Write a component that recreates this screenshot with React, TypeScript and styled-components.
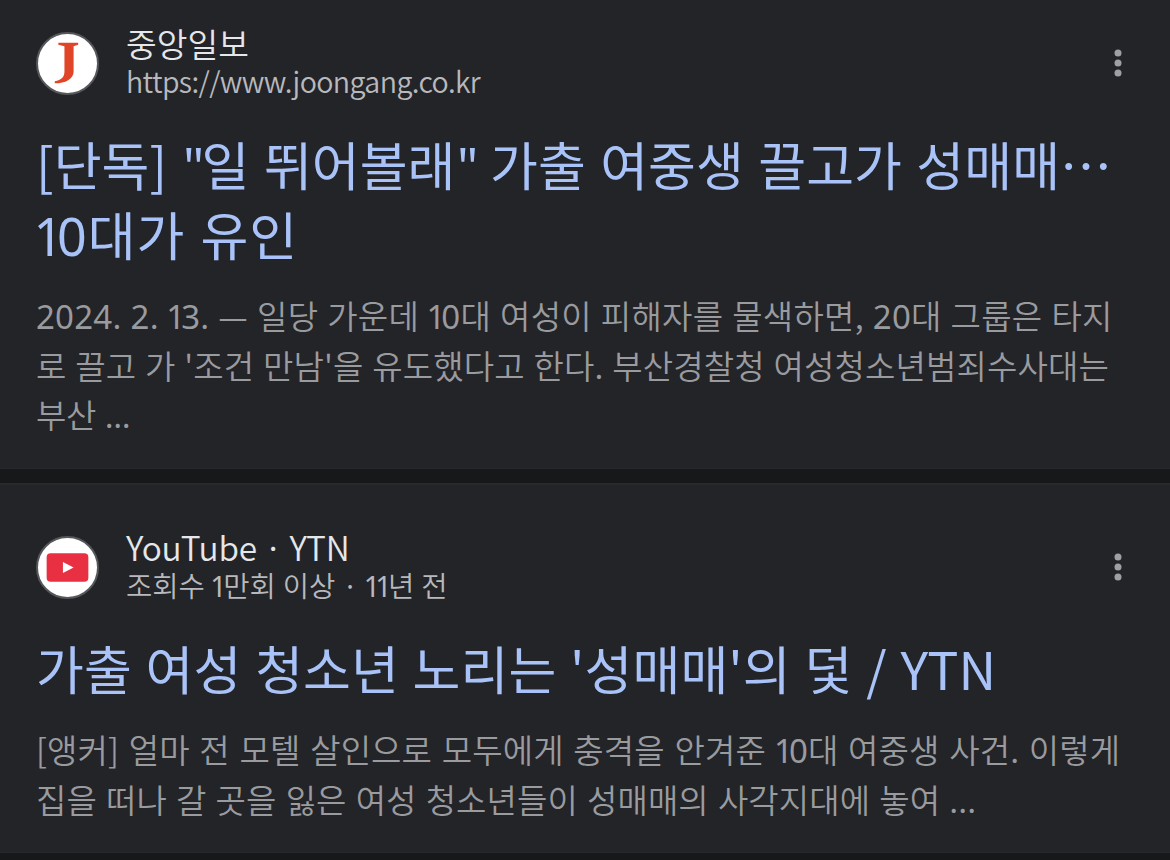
import styled, { createGlobalStyle } from "styled-components"

const GlobalStyle = createGlobalStyle`
    body {
        margin: 0;
        background: #17181a;
        font-family: "Noto Sans CJK KR", sans-serif;
    }
`
const Page = styled.main`
    width: 1170px;
    height: 860px;
    overflow: hidden;
    display: grid;
    grid-template-rows: 469px 370px 1fr;
    row-gap: 14px;
    background: #17181a;
`
const Result = styled.article<{ top: number }>`
    box-sizing: border-box;
    padding: ${({ top }) => top}px 0 0 36px;
    background: #232428;
    border-bottom: 1px solid #28292c;

    & + & {
        box-shadow: inset 0 2px 0 #28292c;
    }
`
const Source = styled.header`
    height: 79px;
    display: grid;
    grid-template-columns: 63px 1fr 12px;
    column-gap: 27px;
    padding-right: 46px;
    align-items: center;
`
const SourceText = styled.div`
    padding-bottom: 5px;
`
const Favicon = styled.div`
    box-sizing: border-box;
    width: 63px;
    height: 63px;
    margin-bottom: 3px;
    border: 2px solid #56575a;
    border-radius: 50%;
    background: #fff;
    overflow: hidden;

    svg {
        display: block;
        width: 59px;
        height: 59px;
    }
`
const Dots = styled.svg`
    width: 12px;
    height: 30px;
    margin-bottom: 4px;
    fill: #9fa0a4;
`
const Line = styled.span<{ track?: number; gap?: number }>`
    display: block;
    white-space: pre;
    letter-spacing: ${({ track = 0 }) => track}px;
    word-spacing: ${({ gap = 0 }) => gap}px;
`
const Digits = styled.span`
    font-family: "Noto Sans", sans-serif;
    font-weight: 400;
    line-height: 0;
`
const One = styled(Digits)`
    margin-left: -0.05em;
    letter-spacing: -0.12em;
`
const Quote = styled(Digits)`
    margin-left: 0.03em;
    letter-spacing: -0.05em;
`
const SiteName = styled.div`
    color: #e6e7ea;
    font-size: 33.4px;
    font-weight: 350;
    line-height: 38px;
`
const SiteInfo = styled.div`
    color: #b8b9bd;
    font-size: 28.6px;
    font-weight: 350;
    line-height: 38px;
`
const Title = styled.h3`
    margin: 26px 0 0;
    color: #a9c3f8;
    font-size: 52px;
    font-weight: 400;
    line-height: 70px;
`
const Snippet = styled.p`
    margin: 22px 0 0;
    color: #9a9b9f;
    font-size: 33px;
    font-weight: 350;
    line-height: 49.5px;
`

type TextLine = { text: string; track?: number; gap?: number }

const joongang: { title: TextLine[]; snippet: TextLine[] } = {
    title: [
        { text: '[단독] "일 뛰어볼래" 가출 여중생 끌고가 성매매⋯', track: 0.05, gap: 2.7 },
        { text: "10대가 유인", track: 1, gap: 2.5 },
    ],
    snippet: [
        { text: "2024. 2. 13. — 일당 가운데 10대 여성이 피해자를 물색하면, 20대 그룹은 타지", track: 0.24, gap: 1.4 },
        { text: "로 끌고 가 '조건 만남'을 유도했다고 한다. 부산경찰청 여성청소년범죄수사대는", track: 0.15, gap: 1.2 },
        { text: "부산 ...", track: -0.3, gap: 1.5 },
    ],
}
const ytn: { title: TextLine[]; snippet: TextLine[] } = {
    title: [{ text: "가출 여성 청소년 노리는 '성매매'의 덫 / YTN", track: 0.05, gap: 2.1 }],
    snippet: [
        { text: "[앵커] 얼마 전 모텔 살인으로 모두에게 충격을 안겨준 10대 여중생 사건. 이렇게", track: 0.12, gap: 2.2 },
        { text: "집을 떠나 갈 곳을 잃은 여성 청소년들이 성매매의 사각지대에 놓여 ...", track: 0.08, gap: 1.7 },
    ],
}

const MoreDots = () => (
    <Dots viewBox="0 0 12 30">
        <circle cx="6" cy="5" r="3.5" />
        <circle cx="6" cy="15" r="3.5" />
        <circle cx="6" cy="25" r="3.5" />
    </Dots>
)

// digits and double quotes come from the latin face, the "1" is set tighter than the rest
const renderText = (text: string) =>
    text.split(/(1|[02-9]+|")/).map((part, i) => {
        if (part === "1") return <One key={i}>1</One>
        if (part === '"') return <Quote key={i}>{part}</Quote>
        if (/^\d+$/.test(part)) return <Digits key={i}>{part}</Digits>
        return part
    })

const renderLines = (lines: TextLine[]) =>
    lines.map((line) => (
        <Line key={line.text} track={line.track} gap={line.gap}>{renderText(line.text)}</Line>
    ))

function App() {
    return (
        <>
            <GlobalStyle />
            <Page>
                <Result top={24}>
                    <Source>
                        <Favicon>
                            <svg viewBox="0 0 58 58">
                                <path d="M20 8.500H39.500V10.500L35 12V37C35 44 27 48.500 16.500 48.500V46.500C23 45 26 42 26 37V12L20 10.500Z" fill="#df4526" />
                            </svg>
                        </Favicon>
                        <SourceText>
                            <SiteName><Line>중앙일보</Line></SiteName>
                            <SiteInfo><Line track={-0.62}>https://www.joongang.co.kr</Line></SiteInfo>
                        </SourceText>
                        <MoreDots />
                    </Source>
                    <Title>{renderLines(joongang.title)}</Title>
                    <Snippet>{renderLines(joongang.snippet)}</Snippet>
                </Result>
                <Result top={45}>
                    <Source>
                        <Favicon>
                            <svg viewBox="0 0 58 58">
                                <rect x="8.500" y="15" width="41" height="28" rx="4" fill="#e93042" />
                                <path d="M24.500 23.500L35 29L24.500 34.500Z" fill="#fff" />
                            </svg>
                        </Favicon>
                        <SourceText>
                            <SiteName><Line track={-0.25}>YouTube · YTN</Line></SiteName>
                            <SiteInfo><Line track={-0.1} gap={0.8}>{renderText("조회수 1만회 이상 · 11년 전")}</Line></SiteInfo>
                        </SourceText>
                        <MoreDots />
                    </Source>
                    <Title>{renderLines(ytn.title)}</Title>
                    <Snippet>{renderLines(ytn.snippet)}</Snippet>
                </Result>
            </Page>
        </>
    )
}
export default App
